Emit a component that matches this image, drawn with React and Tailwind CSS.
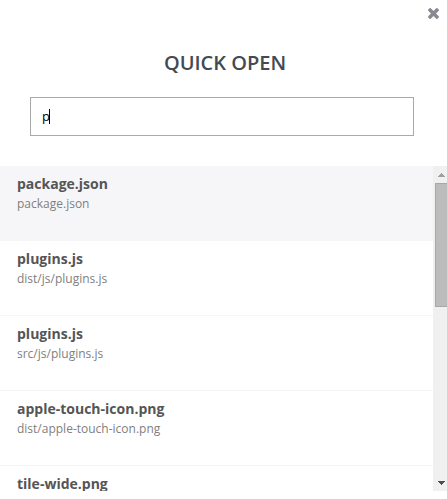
import React, { useState } from "react";

const files = [
  { name: "package.json", path: "package.json" },
  { name: "plugins.js", path: "dist/js/plugins.js" },
  { name: "plugins.js", path: "src/js/plugins.js" },
  { name: "apple-touch-icon.png", path: "dist/apple-touch-icon.png" },
  { name: "tile-wide.png", path: "" },
];

function CloseIcon() {
  return (
    <svg viewBox="302 366 1188 1188" className="size-[11px]" fill="currentColor" aria-hidden="true">
      <path d="M1490 1322q0 40-28 68l-136 136q-28 28-68 28t-68-28l-294-294-294 294q-28 28-68 28t-68-28l-136-136q-28-28-28-68t28-68l294-294-294-294q-28-28-28-68t28-68l136-136q28-28 68-28t68 28l294 294 294-294q28-28 68-28t68 28l136 136q28 28 28 68t-28 68l-294 294 294 294q28 28 28 68z" />
    </svg>
  );
}

function FileRow({ file, active }) {
  return (
    <li className={active ? "bg-[#f6f6f9]" : "bg-white"}>
      <button
        type="button"
        className="flex h-[75px] w-full flex-col justify-start border-b border-[#f6f6f9] px-[17px] pt-2 text-left"
      >
        <span className="text-sm leading-5 font-bold text-[#555555]">{file.name}</span>
        {file.path && <span className="text-xs leading-5 text-[#808080]">{file.path}</span>}
      </button>
    </li>
  );
}

function Scrollbar() {
  return (
    <div className="flex w-[14px] shrink-0 flex-col bg-[#f0f0f0]" aria-hidden="true">
      <div className="flex h-[17px] items-center pl-[5px]">
        <svg viewBox="0 0 7 4" className="h-1 w-[7px]" fill="#a0a0a0" shapeRendering="crispEdges">
          <path d="M3 0h1v1h1v1h1v1h1v1H0V3h1V2h1V1h1z" />
        </svg>
      </div>
      <div className="ml-[2px] h-[124px] border border-r-0 border-[#a8a8a8] bg-[#bcbcbc]" />
      <div className="mt-auto flex h-[17px] items-center pl-[5px]">
        <svg viewBox="0 0 7 4" className="h-1 w-[7px]" fill="#505050" shapeRendering="crispEdges">
          <path d="M0 0h7v1H6v1H5v1H4v1H3V3H2V2H1V1H0z" />
        </svg>
      </div>
    </div>
  );
}

export default function App() {
  const [query, setQuery] = useState("p");
  return (
    <main
      className="relative min-h-screen bg-white pt-[49px]"
      style={{ fontFamily: '"Open Sans", "Noto Sans", sans-serif' }}
    >
      <button type="button" aria-label="Close" className="absolute top-2 right-2 text-[#878a91]">
        <CloseIcon />
      </button>

      <h1 className="pl-[3px] text-center text-xl leading-7 font-semibold text-[#434a54]">QUICK OPEN</h1>

      <div className="relative mt-5 mr-[33px] ml-[30px]">
        <input
          type="text"
          aria-label="File name"
          value={query}
          onChange={(e) => setQuery(e.target.value)}
          className="block h-[39px] w-full border border-[#a9a9a9] bg-white px-[11px] pb-[2px] text-[13px] text-black outline-none"
        />
        <span className="absolute top-3 left-[19px] h-[15px] w-px bg-black" aria-hidden="true" />
      </div>

      <div className="mt-[30px] flex h-[325px] overflow-hidden">
        <ul className="min-w-0 flex-1 overflow-hidden">
          {files.map((file, i) => (
            <FileRow key={i} file={file} active={i === 0} />
          ))}
        </ul>
        <Scrollbar />
      </div>
    </main>
  );
}
